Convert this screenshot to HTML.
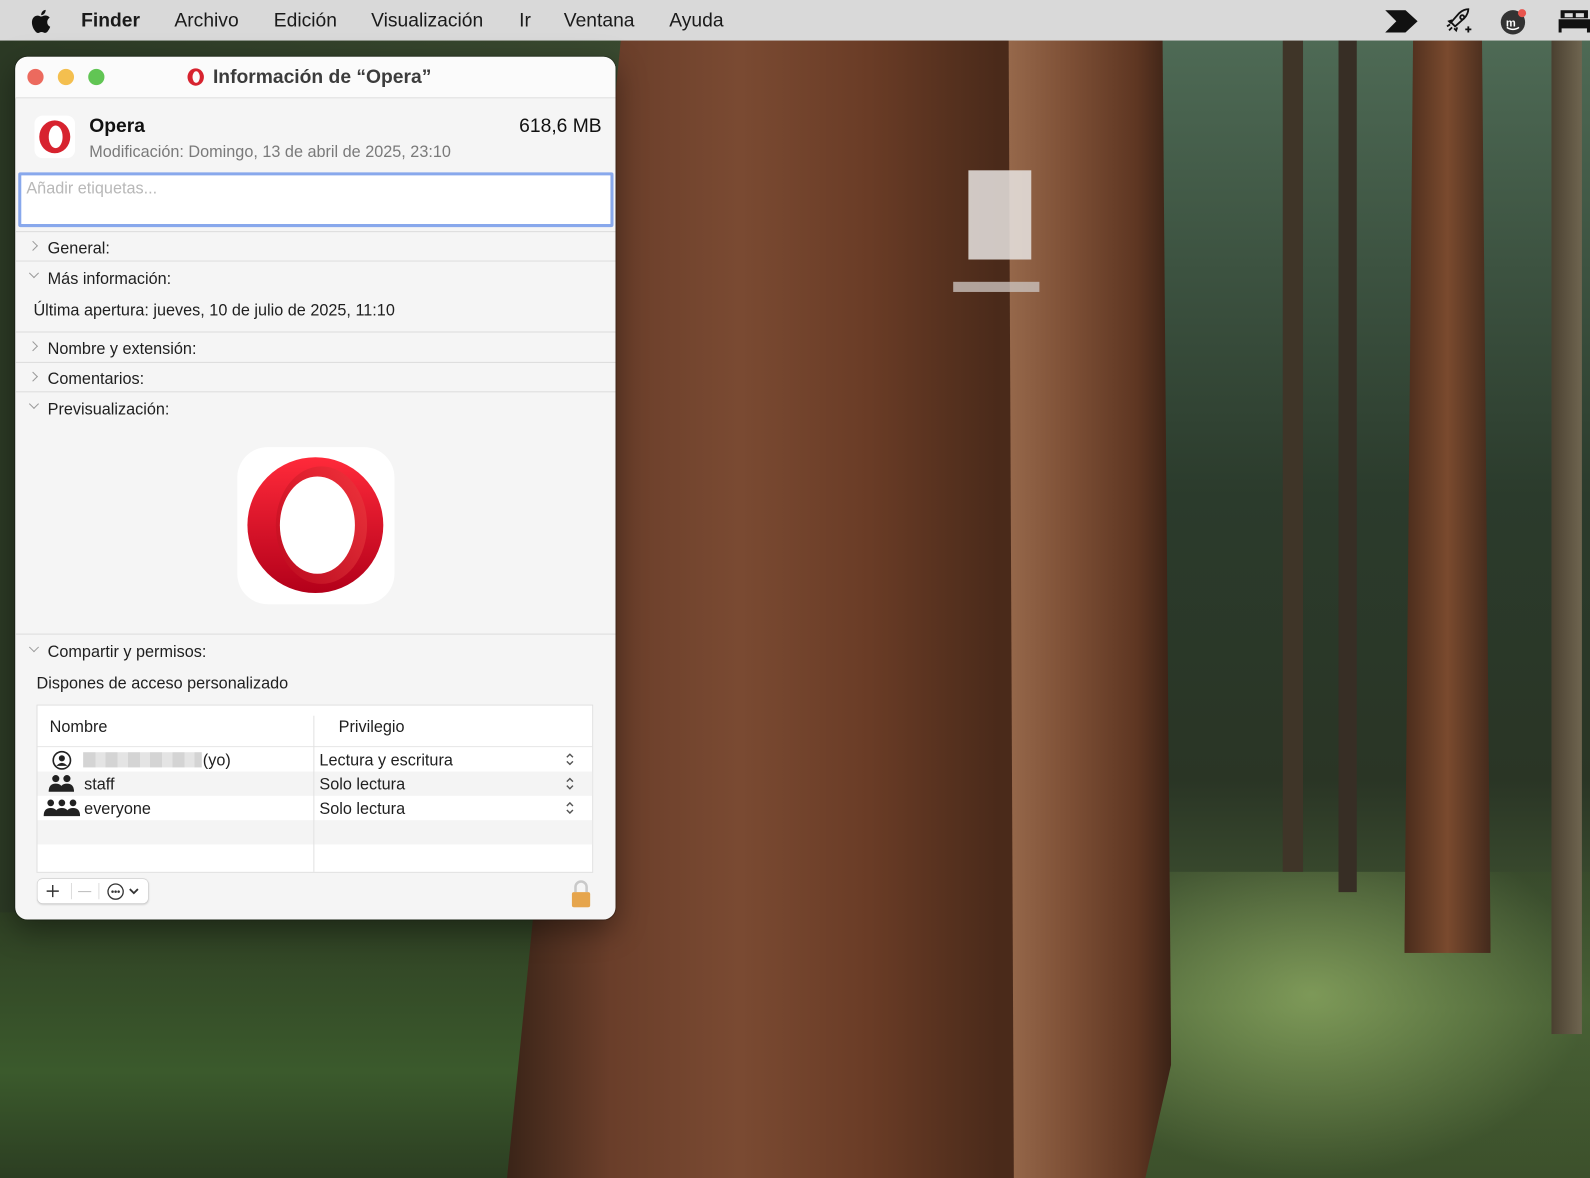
<!DOCTYPE html>
<html><head><meta charset="utf-8"><style>
*{margin:0;padding:0;box-sizing:border-box}
html,body{width:1590px;height:1178px;overflow:hidden;background:#2e3a26}
#root{position:absolute;left:0;top:0;width:1568px;height:1162px;transform:scale(1.01403,1.01377);transform-origin:0 0;font-family:"Liberation Sans",sans-serif;overflow:hidden}
.a{position:absolute}
.menu{left:0;top:0;width:1568px;height:40px;background:#d9d9d9;font-size:19px;color:#1a1a1a}
.menu span{position:absolute;top:10px}
.win{left:15px;top:56px;width:592px;height:851px;background:#f5f5f5;border-radius:12px;overflow:hidden;box-shadow:0 0 0 1px rgba(0,0,0,.25),0 10px 30px rgba(0,0,0,.4)}
.t{position:absolute;font-size:16px;color:#1f1f1f;white-space:nowrap;margin-top:2px}
.sep{position:absolute;left:0;width:592px;height:1px;background:#dcdcdc}
.chev{position:absolute;width:7px;height:7px;border-right:1.5px solid #9a9a9a;border-bottom:1.5px solid #9a9a9a}
</style></head><body><div id="root">
<!-- background -->
<div class="a" style="left:0;top:40px;width:1568px;height:1122px;background:linear-gradient(90deg,#2c3a25 0%,#3a4a30 40%,#2d3a27 70%,#4a5c40 100%)"></div>
<div class="a" style="left:1000px;top:40px;width:568px;height:1122px;background:linear-gradient(180deg,#4e6a55 0%,#2b3b2c 40%,#2a3525 65%,#4b6338 85%,#3c4f2c 100%)"></div>
<div class="a" style="left:1110px;top:860px;width:458px;height:302px;background:radial-gradient(ellipse at 40% 40%,rgba(160,190,110,.6),rgba(60,85,40,.2) 70%)"></div>
<div class="a" style="left:0;top:900px;width:620px;height:262px;background:linear-gradient(180deg,#2f4024,#3b5a2c 60%,#2c3e22)"></div>
<div class="a" style="left:1265px;top:40px;width:20px;height:820px;background:#3f3528"></div>
<div class="a" style="left:1320px;top:40px;width:18px;height:840px;background:#372e25"></div>
<div class="a" style="left:1530px;top:40px;width:30px;height:980px;background:linear-gradient(90deg,#4a4030,#6f6550)"></div>
<div class="a" style="left:1385px;top:40px;width:85px;height:900px;background:linear-gradient(90deg,#4a2c1c,#7a4a2e 50%,#432a1c);clip-path:polygon(10% 0,90% 0,100% 100%,0 100%)"></div>
<div class="a" style="left:985px;top:40px;width:170px;height:1122px;background:linear-gradient(90deg,#9a6c4e,#7e5036 40%,#5e3622 80%,#3a2216);clip-path:polygon(5% 0,95% 0,100% 90%,85% 100%,3% 100%)"></div>
<div class="a" style="left:500px;top:40px;width:510px;height:1122px;background:linear-gradient(90deg,#3a2418 0%,#6a3e2a 20%,#7a4a32 45%,#6a3c26 70%,#4a2a1a 95%);clip-path:polygon(22% 0,97% 0,98% 100%,0 100%)"></div>
<div class="a" style="left:955px;top:168px;width:62px;height:88px;background:#e8e4e2;opacity:.85"></div>
<div class="a" style="left:940px;top:278px;width:85px;height:10px;background:#c9c0bb;opacity:.8"></div>
<!-- menu bar -->
<div class="a menu">
<svg class="a" style="left:29px;top:9px" width="22" height="24" viewBox="0 0 17 20"><path d="M14 10.6c0-2.4 2-3.5 2-3.6-1.1-1.6-2.8-1.8-3.4-1.8-1.4-.1-2.8.9-3.5.9s-1.8-.8-3-.8C4.5 5.3 3 6.2 2.2 7.6c-1.7 2.9-.4 7.3 1.2 9.6.8 1.1 1.7 2.4 2.9 2.4s1.6-.8 3-.8 1.8.8 3 .7c1.3 0 2.1-1.1 2.8-2.3.9-1.3 1.3-2.6 1.3-2.7 0 0-2.5-1-2.4-3.9zM11.7 3.6c.6-.8 1.1-1.9 1-3-.9 0-2.1.6-2.7 1.4-.6.7-1.1 1.8-1 2.9 1 .1 2.1-.5 2.7-1.3z" fill="#111"/></svg>
<span style="left:80px;font-weight:bold">Finder</span>
<span style="left:172px">Archivo</span>
<span style="left:270px">Edición</span>
<span style="left:366px">Visualización</span>
<span style="left:512px">Ir</span>
<span style="left:556px">Ventana</span>
<span style="left:660px">Ayuda</span>
<svg class="a" style="left:1366px;top:10px" width="34" height="22" viewBox="0 0 34 22"><path d="M0 0h14l11 11-11 11H0l11-11z M12 0h8l12 11-12 11h-8l11-11z" fill="#111"/></svg>
<svg class="a" style="left:1425px;top:8px" width="30" height="26" viewBox="0 0 30 26" fill="none" stroke="#111" stroke-width="1.8"><path d="M9 17l-3-3 8-9c3-3 7-4 9-4 0 2-1 6-4 9l-9 8z"/><circle cx="17" cy="9" r="2"/><path d="M7 12l-3 1 2 2M12 19l-1 3-2-2M4 22l3-3M2 18l3-2"/><path d="M23 18v6M20 21h6"/></svg>
<svg class="a" style="left:1479px;top:8px" width="28" height="26" viewBox="0 0 28 26"><circle cx="13" cy="14" r="12" fill="#333"/><text x="6" y="18" font-family="Liberation Sans" font-size="11" font-weight="bold" fill="#fff">m</text><path d="M7 19q6 4 12 0" stroke="#fff" stroke-width="1.5" fill="none"/><circle cx="22" cy="5" r="4" fill="#e8554e"/></svg>
<svg class="a" style="left:1537px;top:10px" width="31" height="22" viewBox="0 0 31 22"><path d="M2 0h27v8H2z M0 9h31v9H0z M0 18h3v4H0z M28 18h3v4h-3z" fill="#111"/><rect x="6" y="3" width="8" height="4" fill="#d9d9d9"/><rect x="17" y="3" width="8" height="4" fill="#d9d9d9"/></svg>
</div>
<!-- window -->
<div class="a win">
<div class="a" style="left:0;top:0;width:592px;height:41px;background:#fbfbfb;border-bottom:1px solid #dedede"></div>
<div class="a" style="left:12px;top:12px;width:16px;height:16px;border-radius:50%;background:#ec6a5e"></div>
<div class="a" style="left:42px;top:12px;width:16px;height:16px;border-radius:50%;background:#f4bf4f"></div>
<div class="a" style="left:72px;top:12px;width:16px;height:16px;border-radius:50%;background:#61c554"></div>
<svg class="a" style="left:169px;top:11px" width="18" height="18" viewBox="0 0 20 20"><ellipse cx="10" cy="10" rx="9" ry="9.5" fill="#d7232f"/><ellipse cx="10.5" cy="10" rx="4" ry="6.3" fill="#fbfbfb"/></svg>
<div class="t" style="left:195px;top:8px;font-size:19px;font-weight:bold;color:#3c3c3c">Información de “Opera”</div>
<div class="a" style="left:19px;top:58px;width:40px;height:42px;background:#fff;border-radius:8px"></div>
<svg class="a" style="left:21px;top:61px" width="36" height="36" viewBox="0 0 20 20"><ellipse cx="10" cy="10" rx="8.5" ry="9" fill="#d7232f"/><ellipse cx="10.5" cy="10" rx="3.8" ry="6.2" fill="#fff"/></svg>
<div class="t" style="left:73px;top:56px;font-size:19px;font-weight:bold;color:#111">Opera</div>
<div class="t" style="left:497px;top:56px;font-size:19px;color:#111">618,6 MB</div>
<div class="t" style="left:73px;top:84px;color:#7a7a7a">Modificación: Domingo, 13 de abril de 2025, 23:10</div>
<div class="a" style="left:3px;top:114px;width:587px;height:54px;background:#fff;border:3.5px solid #88a8ec;border-radius:2px"></div>
<div class="t" style="left:11px;top:120px;color:#b8b8b8">Añadir etiquetas...</div>
<div class="sep" style="top:172px"></div>
<div class="chev" style="left:14px;top:183px;transform:rotate(-45deg)"></div>
<div class="t" style="left:32px;top:179px">General:</div>
<div class="sep" style="top:201px"></div>
<div class="chev" style="left:15px;top:210px;transform:rotate(45deg)"></div>
<div class="t" style="left:32px;top:209px">Más información:</div>
<div class="t" style="left:18px;top:240px">Última apertura: jueves, 10 de julio de 2025, 11:10</div>
<div class="sep" style="top:271px"></div>
<div class="chev" style="left:14px;top:282px;transform:rotate(-45deg)"></div>
<div class="t" style="left:32px;top:278px">Nombre y extensión:</div>
<div class="sep" style="top:301px"></div>
<div class="chev" style="left:14px;top:312px;transform:rotate(-45deg)"></div>
<div class="t" style="left:32px;top:308px">Comentarios:</div>
<div class="sep" style="top:330px"></div>
<div class="chev" style="left:15px;top:339px;transform:rotate(45deg)"></div>
<div class="t" style="left:32px;top:338px">Previsualización:</div>
<div class="a" style="left:219px;top:385px;width:155px;height:155px;background:#fff;border-radius:30px"></div>
<svg class="a" style="left:228px;top:394px" width="136" height="136" viewBox="0 0 136 136"><defs><linearGradient id="g" x1="0" y1="0" x2="0" y2="1"><stop offset="0" stop-color="#ff2a3a"/><stop offset="1" stop-color="#b3001a"/></linearGradient><linearGradient id="h" x1="0" y1="0" x2="1" y2="0"><stop offset="0" stop-color="#c01020"/><stop offset="1" stop-color="#e84040"/></linearGradient></defs><ellipse cx="68" cy="68" rx="67" ry="67" fill="url(#g)"/><ellipse cx="74" cy="68" rx="45" ry="58" fill="url(#h)" opacity=".5"/><ellipse cx="70" cy="68" rx="37" ry="48" fill="#fff"/></svg>
<div class="sep" style="top:569px"></div>
<div class="chev" style="left:15px;top:579px;transform:rotate(45deg)"></div>
<div class="t" style="left:32px;top:577px">Compartir y permisos:</div>
<div class="t" style="left:21px;top:608px">Dispones de acceso personalizado</div>
<div class="a" style="left:21px;top:639px;width:549px;height:166px;background:#fff;border:1px solid #e0e0e0"></div>
<div class="a" style="left:22px;top:680px;width:547px;height:1px;background:#e6e6e6"></div>
<div class="a" style="left:22px;top:705px;width:547px;height:24px;background:#f4f4f4"></div>
<div class="a" style="left:22px;top:753px;width:547px;height:24px;background:#f4f4f4"></div>
<div class="a" style="left:294px;top:650px;width:1px;height:154px;background:#e2e2e2"></div>
<div class="t" style="left:34px;top:651px">Nombre</div>
<div class="t" style="left:319px;top:651px">Privilegio</div>
<svg class="a" style="left:36px;top:684px" width="20" height="20" viewBox="0 0 20 20"><circle cx="10" cy="10" r="8.5" fill="none" stroke="#222" stroke-width="1.6"/><circle cx="10" cy="8" r="3" fill="#222"/><path d="M4.5 15.5q5.5-6 11 0" fill="#222"/></svg>
<div class="a" style="left:67px;top:686px;width:117px;height:15px;background:repeating-linear-gradient(90deg,#d4d4d4 0 12px,#e4e4e4 12px 22px)"></div>
<div class="t" style="left:185px;top:684px">(yo)</div>
<svg class="a" style="left:32px;top:708px" width="28" height="18" viewBox="0 0 28 18" fill="#222"><circle cx="8" cy="4" r="3.5"/><circle cx="19" cy="4" r="3.5"/><path d="M1 17q0-8 7-8t7 8zM12 17q0-8 7-8t7 8z"/></svg>
<div class="t" style="left:68px;top:708px">staff</div>
<svg class="a" style="left:28px;top:732px" width="36" height="18" viewBox="0 0 36 18" fill="#222"><circle cx="7" cy="4" r="3.3"/><circle cx="18" cy="4" r="3.3"/><circle cx="29" cy="4" r="3.3"/><path d="M0 17q0-8 7-8t7 8zM11 17q0-8 7-8t7 8z M22 17q0-8 7-8t7 8z"/></svg>
<div class="t" style="left:68px;top:732px">everyone</div>
<div class="t" style="left:300px;top:684px">Lectura y escritura</div>
<div class="t" style="left:300px;top:708px">Solo lectura</div>
<div class="t" style="left:300px;top:732px">Solo lectura</div>
<svg class="a" style="left:543px;top:687px" width="8" height="12" viewBox="0 0 8 12" fill="none" stroke="#555" stroke-width="1.4"><path d="M1 4l3-3 3 3M1 8l3 3 3-3"/></svg>
<svg class="a" style="left:543px;top:711px" width="8" height="12" viewBox="0 0 8 12" fill="none" stroke="#555" stroke-width="1.4"><path d="M1 4l3-3 3 3M1 8l3 3 3-3"/></svg>
<svg class="a" style="left:543px;top:735px" width="8" height="12" viewBox="0 0 8 12" fill="none" stroke="#555" stroke-width="1.4"><path d="M1 4l3-3 3 3M1 8l3 3 3-3"/></svg>
<div class="a" style="left:22px;top:811px;width:109px;height:24px;background:#fff;border-radius:5px;box-shadow:0 0 0 .5px #ccc,0 1px 2px rgba(0,0,0,.2)"></div>
<svg class="a" style="left:30px;top:816px" width="14" height="14" viewBox="0 0 14 14" stroke="#333" stroke-width="1.4"><path d="M7 1v12M1 7h12"/></svg>
<div class="a" style="left:55px;top:815px;width:1px;height:16px;background:#ddd"></div>
<div class="a" style="left:62px;top:823px;width:13px;height:1px;background:#bbb"></div>
<div class="a" style="left:82px;top:815px;width:1px;height:16px;background:#ddd"></div>
<svg class="a" style="left:90px;top:815px" width="36" height="17" viewBox="0 0 36 17" fill="none" stroke="#333" stroke-width="1.3"><circle cx="9" cy="8.5" r="7.5"/><circle cx="6" cy="8.5" r=".6" fill="#333"/><circle cx="9" cy="8.5" r=".6" fill="#333"/><circle cx="12" cy="8.5" r=".6" fill="#333"/><path d="M23 6l4 4 4-4" stroke-width="1.8"/></svg>
<svg class="a" style="left:548px;top:812px" width="20" height="27" viewBox="0 0 20 27"><path d="M4.5 12V7a5.5 5.5 0 0 1 11 0v5" fill="none" stroke="#c9c9c9" stroke-width="2.5"/><rect x="1" y="12" width="18" height="15" rx="2" fill="#e6a54c"/></svg>
</div>
</div></body></html>
